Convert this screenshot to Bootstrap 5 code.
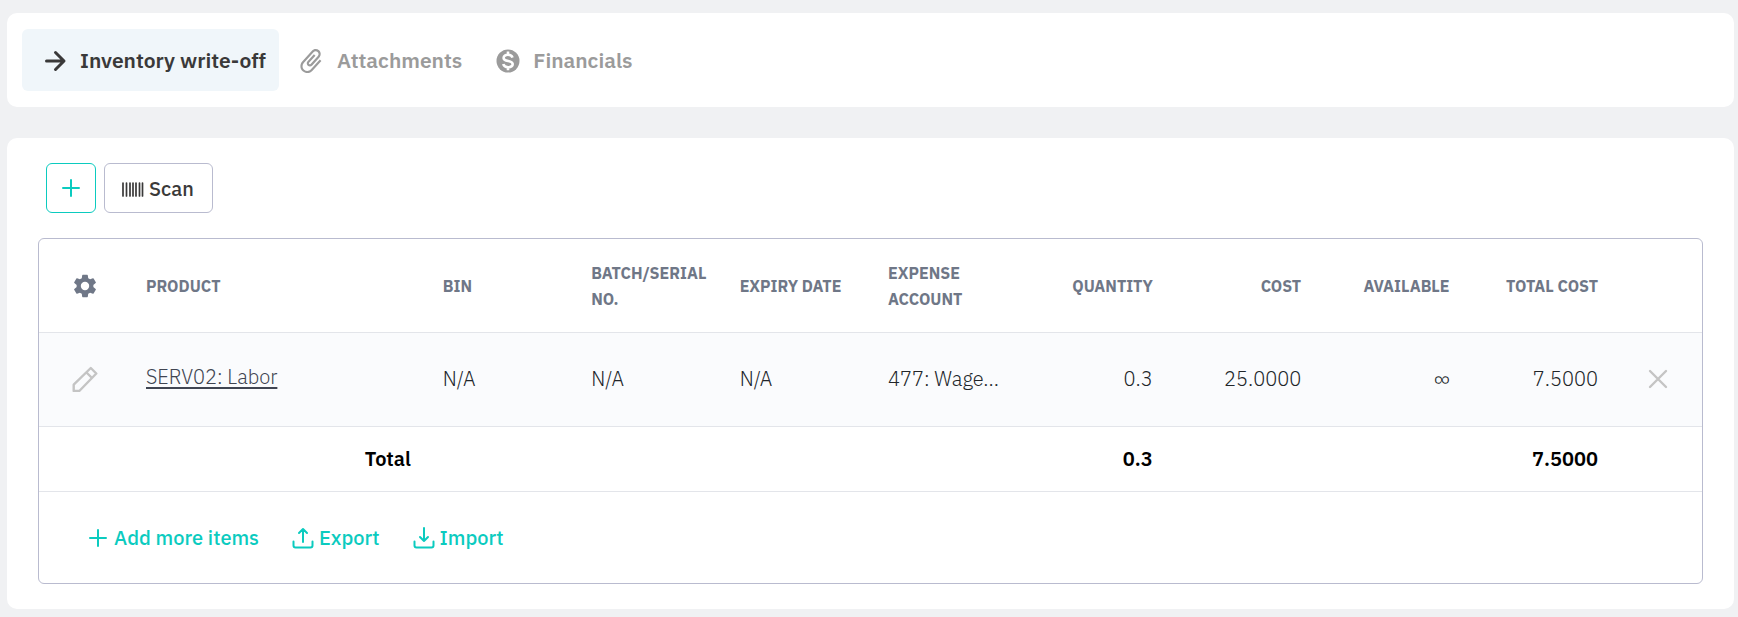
<!DOCTYPE html>
<html lang="en">
<head>
<meta charset="utf-8">
<meta name="viewport" content="width=device-width, initial-scale=1">
<title>Inventory write-off</title>
<link href="https://cdn.jsdelivr.net/npm/bootstrap@5.3.0/dist/css/bootstrap.min.css" rel="stylesheet">
<style>
  :root { --teal: #0bcbbf; --ink: #3a3939; --muted: #9b9b9b; --frame: #b9bbcf; --line: #e3e5ea; }
  body { background: #f0f1f3; color: var(--ink); font-family: "IBM Plex Sans", "Open Sans", sans-serif; font-size: 20px; padding: 13px 4px 8px 7px; }
  .panel { background: #fff; border-radius: 10px; }
  .tab-bar { padding: 16px 15px; margin-bottom: 31px; }
  .tab-bar .nav-link { display: flex; align-items: center; height: 62px; gap: 13px; padding: 1px 13px 0 21px; border-radius: 6px; color: var(--muted); font-size: 21px; font-weight: 600; }
  .tab-bar .nav-link.active { background: #f0f6fa; color: var(--ink); }
  .tool { height: 50px; background: #fff; border: 1px solid var(--frame); border-radius: 6px; color: var(--ink); font-size: 20px; font-weight: 500; }
  .tool-add { width: 50px; border-color: var(--teal); color: var(--teal); }
  .tool-scan { padding: 2px 18px 0 16px; }
  .tools { padding: 0 8px 25px; }
  .work { padding: 25px 31px; }
  .grid-frame { border: 1px solid var(--frame); border-radius: 6px; overflow: hidden; }
  .items { table-layout: fixed; margin: 0; min-width: 1240px; --bs-table-bg: transparent; }
  .items > :not(caption) > * > * { padding: 0 16px; vertical-align: middle; border-color: var(--line); color: inherit; }
  .items thead th { padding-top: 2px; }
  .items th { color: #6f7787; font-size: 16px; font-weight: 700; line-height: 26px; text-transform: uppercase; }
  .items thead tr { height: 93px; }
  .items tbody tr { height: 94px; background: #fafbfd; font-weight: 300; }
  .items tfoot tr { height: 65px; color: #000; font-weight: 600; }
  .items tfoot th { color: #000; font-size: 20px; font-weight: 600; text-transform: none; }
  .items tbody .cell-product { padding-bottom: 4px; }
  .col-edit { width: 91px; }
  .col-remove { width: 88px; }
  .col-product { width: 17.85%; }
  .bare { display: flex; margin: 0 auto; padding: 0; border: 0; background: none; color: #c4c4c4; }
  .bare-dark { color: #6f7787; }
  .product-link { color: #404552; text-decoration-thickness: 2px; text-underline-offset: 3px; }
  .actions { height: 91px; gap: 33px; padding: 2px 48px 0; }
  .actions .btn { display: flex; align-items: center; gap: 5px; padding: 0; border: 0; color: var(--teal); font-size: 20px; font-weight: 500; }
  svg { flex: none; fill: none; stroke: currentColor; stroke-linecap: round; stroke-linejoin: round; }
  svg.solid { fill: currentColor; stroke: none; }
</style>
</head>
<body>
<nav class="panel tab-bar" aria-label="Document sections">
  <ul class="nav">
    <li class="nav-item"><a class="nav-link active" aria-current="page" href="#writeoff">
      <svg width="24" height="24" viewBox="0 0 24 24" stroke-width="3"><path d="M3.500 12H20M12.500 3.500l8.500 8.500-8.500 8.500"/></svg>Inventory write-off</a></li>
    <li class="nav-item"><a class="nav-link" href="#attachments">
      <svg class="solid" width="24" height="24" viewBox="2.500 3 19 19"><path transform="rotate(-48 12 12.500)" d="M1 12.500C1 9.460 3.460 7 6.500 7H18c2.210 0 4 1.790 4 4s-1.790 4-4 4H9.500C8.120 15 7 13.880 7 12.500S8.120 10 9.500 10H17v1.700H9.410c-.850 0-.850 1.600 0 1.600H18c1.270 0 2.300-1 2.300-2.300s-1-2.300-2.300-2.300H6.500C4.400 8.700 2.700 10.400 2.700 12.500S4.400 16.300 6.500 16.300H17V18H6.500C3.460 18 1 15.540 1 12.500z"/></svg>Attachments</a></li>
    <li class="nav-item"><a class="nav-link" href="#financials">
      <svg class="solid" width="24" height="24" viewBox="0 0 24 24"><circle cx="12" cy="12" r="11.500"/><path d="M16.500 8.600C15.900 6.600 14 5.800 12 5.800c-2.500 0-4.400 1.200-4.400 3.100 0 4.300 9.100 2 9.100 6.200 0 2-2 3.100-4.600 3.100-2.500 0-4.400-1.100-4.800-3.100M12 2.600v3M12 18v3.200" fill="none" stroke="#fff" stroke-width="2.600" stroke-linecap="butt"/></svg>Financials</a></li>
  </ul>
</nav>

<main class="panel work">
  <div class="tools d-flex gap-2">
    <button class="tool tool-add d-flex align-items-center justify-content-center p-0" type="button" aria-label="Add item">
      <svg width="20" height="20" viewBox="0 0 20 20" stroke-width="2"><path d="M10 2v16M2 10h16"/></svg></button>
    <button class="tool tool-scan d-flex align-items-center gap-1" type="button">
      <svg width="24" height="15" viewBox="0 0 24 15" stroke-width="1.700" stroke-linecap="butt"><path d="M2 1v13M5.500 1v13M9 1v13M12 1v13M15 1v13M18.500 1v13M21.500 1v13"/></svg>Scan</button>
  </div>

  <div class="grid-frame">
    <div class="table-responsive">
    <table class="table items">
      <colgroup><col class="col-edit"><col class="col-product"><col span="8"><col class="col-remove"></colgroup>
      <thead>
        <tr>
          <th><button class="bare bare-dark" type="button" aria-label="Table settings">
            <svg class="solid" width="28" height="28" viewBox="0 0 24 24"><path d="M19.140 12.940c.04-.3.060-.610.060-.940s-.02-.640-.07-.940l2.030-1.580a.49.490 0 0 0 .12-.610l-1.920-3.320a.488.488 0 0 0-.590-.220l-2.390.960c-.5-.380-1.030-.7-1.620-.940l-.360-2.540a.484.484 0 0 0-.480-.410h-3.840c-.24 0-.430.170-.470.410l-.360 2.540c-.590.240-1.130.570-1.620.940l-2.390-.960c-.220-.080-.470 0-.590.220L2.740 8.870c-.120.210-.080.470.120.610l2.030 1.580c-.05.3-.090.630-.090.940s.02.640.07.940l-2.030 1.580a.49.490 0 0 0-.120.610l1.920 3.320c.120.220.370.290.590.220l2.390-.960c.5.380 1.030.7 1.620.940l.360 2.540c.05.240.240.410.480.410h3.840c.24 0 .440-.170.470-.410l.360-2.540c.590-.240 1.130-.560 1.620-.940l2.390.960c.220.080.470 0 .590-.220l1.920-3.320c.120-.220.070-.470-.120-.610zM12 15.600A3.600 3.600 0 1 1 12 8.400a3.600 3.600 0 0 1 0 7.200z"/></svg></button></th>
          <th>Product</th><th>Bin</th><th>Batch/Serial No.</th><th>Expiry date</th><th>Expense account</th>
          <th class="text-end">Quantity</th><th class="text-end">Cost</th><th class="text-end">Available</th><th class="text-end">Total cost</th><th></th>
        </tr>
      </thead>
      <tbody>
        <tr>
          <td><button class="bare" type="button" aria-label="Edit item">
            <svg width="26" height="26" viewBox="0 0 26 26" stroke-width="2.400"><path d="M1.700 25v-6.300L18.800 2l5.500 5.500L7.300 25zM14.500 6.500L20 12"/></svg></button></td>
          <td class="cell-product"><a class="product-link" href="#serv02">SERV02: Labor</a></td>
          <td>N/A</td><td>N/A</td><td>N/A</td><td class="text-nowrap">477: Wage...</td>
          <td class="text-end">0.3</td><td class="text-end">25.0000</td><td class="text-end">∞</td><td class="text-end">7.5000</td>
          <td><button class="bare" type="button" aria-label="Remove item">
            <svg width="20" height="20" viewBox="0 0 20 20" stroke-width="2.400"><path d="M2 2l16 16M18 2L2 18"/></svg></button></td>
        </tr>
      </tbody>
      <tfoot>
        <tr><th class="text-end" colspan="2" scope="row">Total</th><td colspan="4"></td><td class="text-end">0.3</td><td colspan="2"></td><td class="text-end">7.5000</td><td></td></tr>
      </tfoot>
    </table>
    </div>
    <div class="actions d-flex align-items-center">
      <button class="btn" type="button"><svg width="22" height="22" viewBox="0 0 22 22" stroke-width="2"><path d="M11 3v16M3 11h16"/></svg>Add more items</button>
      <button class="btn" type="button"><svg width="22" height="22" viewBox="0 0 22 22" stroke-width="2"><path d="M1.500 14.500v4q0 2 2 2h15q2 0 2-2v-4M11 15V2M7 6l4-4 4 4"/></svg>Export</button>
      <button class="btn" type="button"><svg width="22" height="22" viewBox="0 0 22 22" stroke-width="2"><path d="M1.500 14.500v4q0 2 2 2h15q2 0 2-2v-4M11 1v13M7 10l4 4 4-4"/></svg>Import</button>
    </div>
  </div>
</main>
<script src="https://cdn.jsdelivr.net/npm/bootstrap@5.3.0/dist/js/bootstrap.bundle.min.js"></script>
</body>
</html>
